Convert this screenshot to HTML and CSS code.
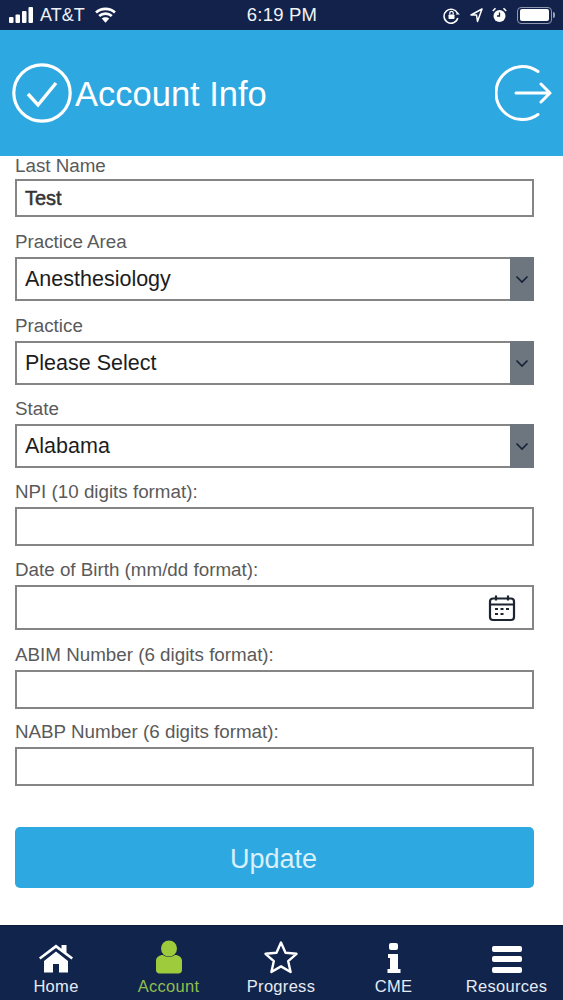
FILE: index.html
```html
<!DOCTYPE html>
<html lang="en">
<head>
<meta charset="utf-8">
<title>Account Info</title>
<link rel="stylesheet" href="styles.css">
</head>
<body>
<div class="phone">
  <div class="status">
    <div class="status-left">
      <svg class="signal" width="25" height="16" viewBox="0 0 25 16"><rect x="0" y="10" width="4.500" height="6" rx="1"/><rect x="6.500" y="7.500" width="4.500" height="8.500" rx="1"/><rect x="13" y="4" width="4.500" height="12" rx="1"/><rect x="19.500" y="0" width="4.500" height="16" rx="1"/></svg>
      <span class="carrier">AT&amp;T</span>
      <svg class="wifi" width="21" height="16" viewBox="0 0 20 15"><path d="M1 5.200C6 .6 14 .6 19 5.200M4 8.400c3.400-3 8.600-3 12 0" fill="none" stroke="#fff" stroke-width="2.600"/><path d="M6.400 10.800c2-1.700 5.200-1.700 7.200 0L10 14.800z" fill="#fff"/></svg>
    </div>
    <div class="clock">6:19 PM</div>
    <div class="status-right">
      <svg width="17" height="17" viewBox="0 0 17 17"><path d="M14.500 6.500A7 7 0 1 0 14.800 11" fill="none" stroke="#fff" stroke-width="1.500"/><path d="M12.800 7.500h4l-2-2.300z" fill="#fff"/><rect x="5.500" y="7.500" width="6" height="4.500" rx=".8" fill="#fff"/><path d="M6.800 7.500V6a1.700 1.700 0 0 1 3.400 0v1.500" fill="none" stroke="#fff" stroke-width="1.200"/></svg>
      <svg class="gps" width="13" height="15" viewBox="0 0 13 15"><path d="M12 1 1 7h5.500l1 6.500z" fill="none" stroke="#fff" stroke-width="1.500" stroke-linejoin="round"/></svg>
      <svg class="alarm" width="15" height="16" viewBox="0 0 15 16"><circle cx="7.500" cy="9" r="6" fill="#fff"/><path d="M7.500 5.500V9H5" fill="none" stroke="#12224a" stroke-width="1.300"/><path d="M.8 4 3.500 1.300M14.200 4 11.500 1.300" stroke="#fff" stroke-width="1.600"/></svg>
      <div class="battery"><div class="battery-fill"></div></div>
      <div class="battery-tip"></div>
    </div>
  </div>

  <header class="header">
    <div class="title-group">
      <svg class="check" width="60" height="60" viewBox="0 0 60 60"><circle cx="30" cy="30" r="28.200" fill="none" stroke="#fff" stroke-width="3.200"/><path d="M16 31 26 42 44 20" fill="none" stroke="#fff" stroke-width="3.400"/></svg>
      <h1 class="title">Account Info</h1>
    </div>
    <svg class="logout" width="57" height="58" viewBox="0 0 57 58"><path d="M43 7.500A26.500 26.500 0 1 0 43 50.500" fill="none" stroke="#fff" stroke-width="3" stroke-linecap="round"/><path d="M21 29h34M46 20l9 9-9 9" fill="none" stroke="#fff" stroke-width="3" stroke-linecap="round"/></svg>
  </header>

  <main class="form">
    <div class="label first">Last Name</div>
    <div class="field text-field strong">Test</div>

    <div class="label gap40">Practice Area</div>
    <div class="field select">
      <span class="value">Anesthesiology</span>
      <span class="arrow"><svg width="14" height="9" viewBox="0 0 14 9"><path d="M1.500 1.500 7 7l5.500-5.500" fill="none" stroke="#14203a" stroke-width="1.600"/></svg></span>
    </div>

    <div class="label gap40">Practice</div>
    <div class="field select">
      <span class="value">Please Select</span>
      <span class="arrow"><svg width="14" height="9" viewBox="0 0 14 9"><path d="M1.500 1.500 7 7l5.500-5.500" fill="none" stroke="#14203a" stroke-width="1.600"/></svg></span>
    </div>

    <div class="label">State</div>
    <div class="field select">
      <span class="value">Alabama</span>
      <span class="arrow"><svg width="14" height="9" viewBox="0 0 14 9"><path d="M1.500 1.500 7 7l5.500-5.500" fill="none" stroke="#14203a" stroke-width="1.600"/></svg></span>
    </div>

    <div class="label">NPI (10 digits format):</div>
    <div class="field text-field"></div>

    <div class="label">Date of Birth (mm/dd format):</div>
    <div class="field date-field">
      <svg width="28" height="28" viewBox="0 0 28 28"><rect x="2" y="4.500" width="24" height="21.500" rx="3" fill="none" stroke="#1c2430" stroke-width="2.200"/><path d="M2 10.500h24M8 1.500v5M20 1.500v5" fill="none" stroke="#1c2430" stroke-width="2.200"/><path d="M7 15h3M12.500 15h3M18 15h3M7 20h3M12.500 20h3" fill="none" stroke="#1c2430" stroke-width="2.200"/></svg>
    </div>

    <div class="label gap40">ABIM Number (6 digits format):</div>
    <div class="field text-field"></div>

    <div class="label gap38">NABP Number (6 digits format):</div>
    <div class="field text-field"></div>

    <button class="update" type="button">Update</button>
  </main>

  <nav class="tabs">
    <div class="tab">
      <svg width="36" height="32" viewBox="0 0 36 32"><path d="M1 15.500 18 2.500l5.500 4.200V3h5v7.500l6.500 5-1.500 2L18 6 2.500 17.500z" fill="#fff"/><path d="M6 19 18 9.500 30 19v11.500H21V22h-6v8.500H6z" fill="#fff"/></svg>
      <span>Home</span>
    </div>
    <div class="tab active">
      <svg width="28" height="34" viewBox="0 0 28 34"><circle cx="14" cy="8.500" r="8" fill="#9ecb3c"/><path d="M1 21c0-3.500 3-6 7-6 3.500 2.500 8.500 2.500 12 0 4 0 7 2.500 7 6v9c0 2.200-1.500 3.500-3.500 3.500h-19C2.500 33.500 1 32.200 1 30z" fill="#9ecb3c"/></svg>
      <span>Account</span>
    </div>
    <div class="tab">
      <svg width="36" height="34" viewBox="0 0 36 34"><path d="M18 2.500 22.500 12.700 33.500 13.800 25.200 21.200 27.600 32 18 26.400 8.400 32 10.800 21.200 2.500 13.800 13.500 12.700z" fill="none" stroke="#fff" stroke-width="2.400" stroke-linejoin="round"/></svg>
      <span>Progress</span>
    </div>
    <div class="tab">
      <svg width="16" height="32" viewBox="0 0 16 32"><rect x="3" y="1" width="9" height="7" rx="2" fill="#fff"/><path d="M2 12h10v15h2.500v4H1.500v-4H4V16H2z" fill="#fff"/></svg>
      <span>CME</span>
    </div>
    <div class="tab">
      <svg width="32" height="30" viewBox="0 0 32 30"><rect x="1" y="2" width="30" height="6" rx="2" fill="#fff"/><rect x="1" y="12" width="30" height="6" rx="2" fill="#fff"/><rect x="1" y="23" width="30" height="6" rx="2" fill="#fff"/></svg>
      <span>Resources</span>
    </div>
  </nav>
</div>
</body>
</html>
```
FILE: styles.css
```css
* { box-sizing: border-box; }
html, body { margin: 0; padding: 0; }
body { background: #fff; font-family: "Liberation Sans", Arial, sans-serif; }

.phone { width: 563px; height: 1000px; overflow: hidden; display: flex; flex-direction: column; background: #fff; }

.status {
  height: 30px; background: #12224a; color: #fff;
  display: grid; grid-template-columns: 1fr auto 1fr; align-items: center;
  padding: 0 8px 0 9px;
}
.status-left { display: flex; align-items: center; }
.signal { fill: #fff; margin-right: 6px; }
.carrier { font-size: 18px; margin-right: 10px; color: #eef1f6; }
.clock { font-size: 18.500px; letter-spacing: .2px; color: #f2f4f8; }
.status-right { display: flex; align-items: center; justify-content: flex-end; gap: 9px; }
.gps { margin-left: 1px; }
.battery { width: 35px; height: 17px; border: 1.500px solid #8f98b0; border-radius: 4px; padding: 1.500px; margin-left: 1px; }
.battery-fill { height: 100%; width: 29px; background: #fff; border-radius: 2px; }
.battery-tip { width: 2px; height: 6px; background: #9aa3b8; margin-left: -8px; border-radius: 0 2px 2px 0; }

.header {
  height: 126px; background: #2ea8e0; color: #fff;
  display: flex; align-items: center; justify-content: space-between;
  padding: 0 11px 0 12px;
}
.title-group { display: flex; align-items: center; gap: 3px; }
.check { flex: none; }
.title { margin: 2px 0 0; font-size: 34.500px; font-weight: 400; line-height: 40px; }
.logout { flex: none; }

.form { flex: 1; padding: 0 29px 0 15px; }
.label { font-size: 18.800px; line-height: 20px; height: 20px; color: #5a5a5a; margin-top: 14px; margin-bottom: 5px; }
.label.gap40 { margin-top: 15px; }
.label.gap38 { margin-top: 13px; }
.label.first { margin-top: 0; margin-bottom: 3px; }

.field {
  width: 519px; border: 2px solid #858585; background: #fff;
  font-size: 21.500px; color: #1d1d1d;
  display: flex; align-items: center;
}
.text-field { height: 39px; padding-left: 8px; }
.strong { color: #333; height: 38px; font-size: 20px; -webkit-text-stroke: .5px #333; }
.select { height: 44px; padding-left: 8px; justify-content: space-between; }
.arrow {
  width: 24px; height: 44px; margin: -2px -2px -2px 0; background: #6d767e;
  display: flex; align-items: center; justify-content: center;
}
.date-field { height: 45px; justify-content: flex-end; padding-right: 16px; }

.update {
  display: block; width: 519px; height: 61px; margin-top: 41px;
  background: #2ea8e0; border: 0; border-radius: 5px; color: #d9f0fb;
  font-family: inherit; font-size: 27px; padding: 4px 2px 0 0;
}

.tabs {
  height: 75px; flex: none; background: #11244c; border-top: 1px solid #0d1b3a;
  display: grid; grid-template-columns: 112px 113px 112px 113px 113px;
}
.tab {
  display: flex; flex-direction: column; align-items: center; justify-content: flex-end;
  color: #e6ebf3; font-size: 16.500px; padding-bottom: 4px; letter-spacing: .3px; gap: 3px;
}
.tab svg { flex: none; }
.tab.active { color: #8fbf4e; }
```
